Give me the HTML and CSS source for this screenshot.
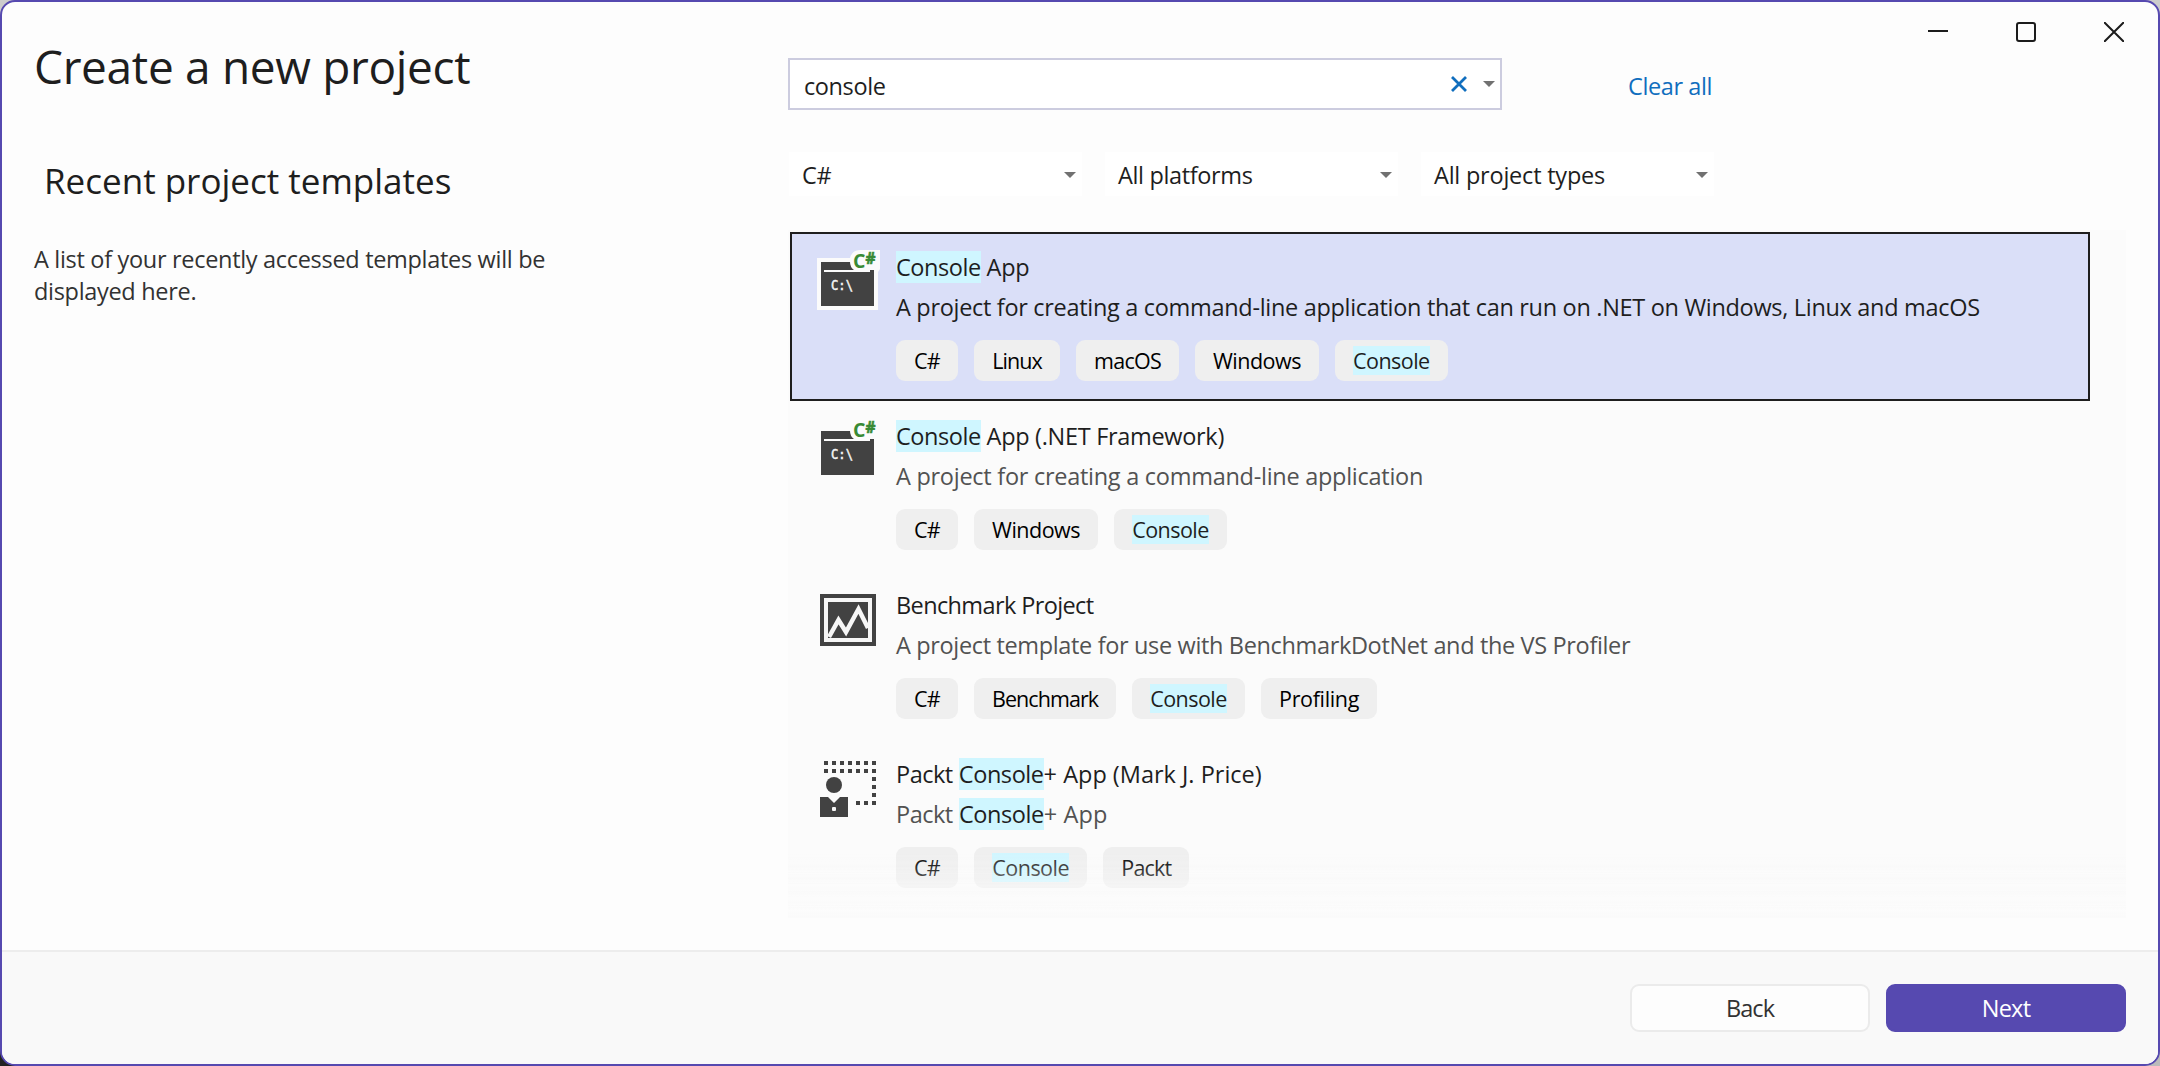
FILE: index.html
```
<!DOCTYPE html>
<html lang="en">
<head>
<meta charset="utf-8">
<title>Create a new project</title>
<link rel="stylesheet" href="styles.css">
</head>
<body>
<div class="window">
  <div class="controls">
    <svg width="20" height="20" viewBox="0 0 20 20"><path d="M0 9h20"/></svg>
    <svg width="20" height="20" viewBox="0 0 20 20"><rect x="1" y="1" width="18" height="18" rx="2"/></svg>
    <svg width="20" height="20" viewBox="0 0 20 20"><path d="M.7.7l18.6 18.6M19.3.7L.7 19.3"/></svg>
  </div>
  <main class="main">
    <section class="recent">
      <h1>Create a new project</h1>
      <h2>Recent project templates</h2>
      <p>A list of your recently accessed templates will be<br>displayed here.</p>
    </section>
    <section class="browse">
      <div class="search-row">
        <div class="search">
          <span>console</span>
          <svg class="clear" width="16" height="16" viewBox="0 0 16 16"><path d="M1 1l14 14M15 1L1 15"/></svg>
          <i class="arrow"></i>
        </div>
        <a class="clear-all">Clear all</a>
      </div>
      <div class="filters">
        <div class="filter"><span>C#</span><i class="arrow"></i></div>
        <div class="filter"><span class="platforms">All platforms</span><i class="arrow"></i></div>
        <div class="filter"><span class="types">All project types</span><i class="arrow"></i></div>
      </div>
      <div class="list">
        <article class="item selected">
          <svg class="icon" width="64" height="64" viewBox="0 0 64 64">
            <path class="plate" d="M1 8h33q2-8 10-8h20v19l-2 3v38H1z"/>
            <path class="dark" d="M5 12h29q0 5 4 8h20v36H5z"/>
            <path class="rule" d="M8 20h46v2H8z"/>
            <text class="cs" x="37" y="18">C</text>
            <text class="hash" x="49.500" y="14">#</text>
            <text class="prompt" x="15" y="40" textLength="22" lengthAdjust="spacingAndGlyphs">C:\</text>
          </svg>
          <div class="info">
            <h3><mark>Console</mark> App</h3>
            <p class="desc">A project for creating a command-line application that can run on .NET on Windows, Linux and macOS</p>
            <div class="tags"><span class="tag w-cs">C#</span><span class="tag w-linux">Linux</span><span class="tag w-macos">macOS</span><span class="tag w-windows">Windows</span><span class="tag w-console"><mark>Console</mark></span></div>
          </div>
        </article>
        <article class="item">
          <svg class="icon" width="64" height="64" viewBox="0 0 64 64">
            <path class="dark" d="M5 12h29q0 5 4 8h20v36H5z"/>
            <path class="rule" d="M8 20h46v2H8z"/>
            <text class="cs" x="37" y="18">C</text>
            <text class="hash" x="49.500" y="14">#</text>
            <text class="prompt" x="15" y="40" textLength="22" lengthAdjust="spacingAndGlyphs">C:\</text>
          </svg>
          <div class="info">
            <h3 class="t-framework"><mark>Console</mark> App (.NET Framework)</h3>
            <p class="desc d-command">A project for creating a command-line application</p>
            <div class="tags"><span class="tag w-cs">C#</span><span class="tag w-windows">Windows</span><span class="tag w-console"><mark>Console</mark></span></div>
          </div>
        </article>
        <article class="item">
          <svg class="icon" width="64" height="64" viewBox="0 0 64 64">
            <path class="dark" d="M4 6h56v52H4z"/>
            <path class="light" d="M8 10h48v44H8z"/>
            <path class="dark" d="M12 14h40v36H12z"/>
            <path class="trace" d="M13 49l9.500-17 7.500 12 12.500-23 9.500 19"/>
          </svg>
          <div class="info">
            <h3 class="t-benchmark">Benchmark Project</h3>
            <p class="desc d-benchmark">A project template for use with BenchmarkDotNet and the VS Profiler</p>
            <div class="tags"><span class="tag w-cs">C#</span><span class="tag w-benchmark">Benchmark</span><span class="tag w-console"><mark>Console</mark></span><span class="tag w-profiling">Profiling</span></div>
          </div>
        </article>
        <article class="item">
          <svg class="icon" width="64" height="64" viewBox="0 0 64 64">
            <path class="dots" d="M8 6h52M8 14h52M40 46h20"/>
            <path class="dots" d="M58 20v28"/>
            <circle class="dark" cx="18" cy="28" r="8"/>
            <path class="dark" d="M4 40h8l6 6 6-6h8v20H4z"/>
            <rect class="light" x="16" y="50" width="4" height="4" rx="1"/>
          </svg>
          <div class="info">
            <h3 class="t-packt"><span class="brand">Packt</span> <mark>Console</mark>+ App (Mark J. Price)</h3>
            <p class="desc d-packt"><span class="brand">Packt</span> <mark>Console</mark>+ App</p>
            <div class="tags"><span class="tag w-cs">C#</span><span class="tag w-console"><mark>Console</mark></span><span class="tag w-packt">Packt</span></div>
          </div>
        </article>
        <div class="fade"></div>
      </div>
    </section>
  </main>
  <footer class="footer">
    <button class="btn back">Back</button>
    <button class="btn next">Next</button>
  </footer>
</div>
</body>
</html>
```
FILE: styles.css
```
* { box-sizing: border-box; margin: 0; padding: 0; }
body {
  width: 2160px;
  height: 1066px;
  overflow: hidden;
  font: 23.5px/32px "Open Sans", "Noto Sans", sans-serif;
  letter-spacing: -.31px;
  color: #1e1e1e;
  background: linear-gradient(90deg, #222 50%, #bbb 50%) bottom / 100% 50% no-repeat #ccc;
}
.window {
  position: relative;
  display: flex;
  flex-direction: column;
  height: 1066px;
  border: 2px solid #5649b0;
  border-radius: 15px;
  background: #fdfdfd;
  overflow: hidden;
}
.controls {
  position: absolute;
  top: 20px;
  right: 34px;
  display: flex;
  gap: 68px;
}
.controls svg { fill: none; stroke: #1c1c1c; stroke-width: 2; stroke-linecap: round; display: block; }
.main { flex: 1; display: grid; grid-template-columns: 786px 1fr; }
.recent { padding: 32px 0 0 32px; }
h1 { font-size: 46px; line-height: 64px; font-weight: 400; letter-spacing: -.33px; }
h2 { margin: 59px 0 38px 10px; font-size: 35px; line-height: 48px; font-weight: 400; letter-spacing: 0; }
.recent p { letter-spacing: -.31px; color: #323232; }
.browse { padding-top: 56px; }
.search-row { display: flex; align-items: center; }
.search {
  display: flex;
  align-items: center;
  width: 714px;
  height: 52px;
  padding: 0 5px 0 14px;
  border: 2px solid #ccccdf;
  background: #fff;
  letter-spacing: -.4px;
}
.search span { flex: 1; padding-top: 3px; }
.clear { margin-right: 16px; fill: none; stroke: #106ebe; stroke-width: 2.800; }
.arrow { width: 12px; height: 6px; background: #717171; clip-path: polygon(0 0, 100% 0, 50% 100%); }
.clear-all { margin-left: 126px; padding-top: 3px; color: #106ebe; letter-spacing: -.4px; }
.filters { display: flex; gap: 23px; margin: 42px 0 0 1px; }
.filter { display: flex; align-items: center; width: 293px; height: 44px; padding: 0 6px 0 13px; background: #fff; }
.filter .arrow { margin-top: 2px; }
.filter span { flex: 1; padding-top: 2px; }
.platforms { letter-spacing: -.35px; }
.types { letter-spacing: -.22px; }
.list { position: relative; width: 1338px; height: 688px; margin-top: 34px; padding: 2px 36px 0 2px; background: #fbfbfb; overflow: hidden; }
.item { display: flex; gap: 16px; height: 169px; padding: 16px 22px; border: 2px solid transparent; }
.selected { border-color: #1e1e1e; background: #dadff8; }
.icon { margin-left: 2px; overflow: visible; }
.dark { fill: #424242; }
.light { fill: #f6f6f6; }
.plate { fill: #fbfbfb; }
.rule { fill: #fbfbfb; }
.cs, .hash { font: 700 19.500px "Open Sans", sans-serif; letter-spacing: 0; fill: #388a34; }
.hash { font-size: 15.500px; stroke: #388a34; stroke-width: .6; }
.prompt { font: 400 14px "DejaVu Sans Mono", monospace; letter-spacing: 0; fill: #f6f6f6; stroke: #f6f6f6; stroke-width: .5; }
.trace { fill: none; stroke: #f6f6f6; stroke-width: 4.5; }
.dots { fill: none; stroke: #424242; stroke-width: 4; stroke-dasharray: 4 4; }
.info { padding-top: 1px; }
h3 { font-size: inherit; font-weight: 400; white-space: nowrap; }
h3 mark, .desc mark { letter-spacing: -.43px; }
.t-framework { letter-spacing: -.31px; }
.t-benchmark { letter-spacing: -.62px; }
.t-packt { letter-spacing: 0; }
.brand { letter-spacing: -.5px; }
.desc { margin-top: 8px; white-space: nowrap; color: #525252; }
.selected .desc { color: #1e1e1e; }
.d-command { letter-spacing: -.27px; }
.d-benchmark { letter-spacing: -.35px; }
.d-packt { letter-spacing: .1px; }
mark { background: #cff6ff; color: #1e1e1e; }
.tags { display: flex; gap: 16.300px; margin-top: 17px; }
.tag {
  height: 41px;
  border-radius: 9px;
  background: #efefef;
  color: #000;
  font-size: 21.5px;
  line-height: 42px;
  letter-spacing: -.73px;
  text-align: center;
}
.tag mark { letter-spacing: -.54px; }
.w-cs { width: 62px; }
.w-linux { width: 85.500px; letter-spacing: -.95px; }
.w-macos { width: 102.800px; }
.w-windows { width: 123.500px; letter-spacing: -.5px; }
.w-console { width: 112.700px; }
.w-benchmark { width: 141.500px; letter-spacing: -.94px; }
.w-profiling { width: 116px; letter-spacing: -.34px; }
.w-packt { width: 86px; letter-spacing: -.83px; }
.fade { position: absolute; inset: auto 0 0 0; height: 70px; background: linear-gradient(#fbfbfb00, #fbfbfb80 35px, #fbfbfb); mask: linear-gradient(#0008, #000); }
.footer {
  display: flex;
  justify-content: flex-end;
  gap: 16px;
  height: 114px;
  padding: 32px 32px 0 0;
  border-top: 2px solid #ededed;
  background: #f9f9f9;
}
.btn { width: 240px; height: 48px; border: 2px solid #ebebeb; border-radius: 9px; background: #fdfdfd; color: #323232; font: inherit; line-height: 44px; letter-spacing: -.9px; }
.next { border-color: #5649b0; background: #5649b0; color: #fff; letter-spacing: -.77px; }
```
